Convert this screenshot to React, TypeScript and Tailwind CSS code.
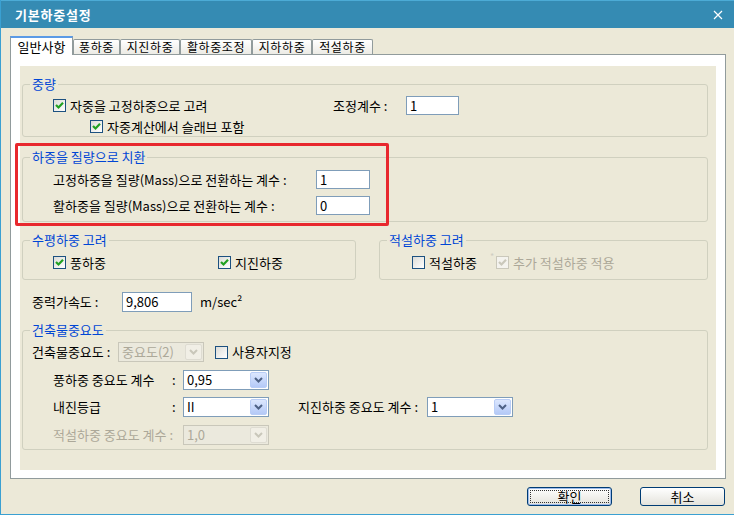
import React from "react";

function Check({ checked, disabled }: { checked?: boolean; disabled?: boolean }) {
    return (
        <span
            className={
                "w-[13px] h-[13px] shrink-0 border flex items-center justify-center " +
                (disabled
                    ? "border-[#cac8bb] bg-[#f4f3ee]"
                    : "border-[#1c5180] bg-gradient-to-br from-[#dcdcd7] to-white")
            }
        >
            {checked && (
                <svg width="11" height="11" viewBox="0 0 11 11">
                    <polyline
                        points="2,5 4.5,7.5 9,2.8"
                        fill="none"
                        stroke={disabled ? "#cac8bb" : "#21a121"}
                        strokeWidth="2.2"
                    />
                </svg>
            )}
        </span>
    );
}

function CheckLabel({ label, checked, disabled }: { label: string; checked?: boolean; disabled?: boolean }) {
    return (
        <label className={"flex items-center gap-[4px] " + (disabled ? "text-[#aca899]" : "text-black")}>
            <Check checked={checked} disabled={disabled} />
            <span>{label}</span>
        </label>
    );
}

function TextBox({ value, w }: { value: string; w: string }) {
    return (
        <div className={"h-full border border-[#7f9db9] bg-white flex items-center pl-[3px] " + w}>{value}</div>
    );
}

function Chevron({ color }: { color: string }) {
    return (
        <svg width="9" height="6" viewBox="0 0 9 6">
            <polyline points="1,1 4.5,4.5 8,1" fill="none" stroke={color} strokeWidth="2" />
        </svg>
    );
}

function Combo({ value, disabled }: { value: string; disabled?: boolean }) {
    return (
        <div
            className={
                "w-[86px] h-[20px] border flex items-stretch p-px " +
                (disabled ? "border-[#c9c7ba] bg-[#ebe9dd] text-[#aca899]" : "border-[#7f9db9] bg-white text-black")
            }
        >
            <span className="flex-1 flex items-center pl-[2px]">{value}</span>
            <span
                className={
                    "w-[17px] rounded-[2px] border flex items-center justify-center " +
                    (disabled
                        ? "border-[#dedcd2] bg-[#f1efe6]"
                        : "border-[#b9cdf6] bg-gradient-to-b from-[#dce7fe] to-[#b4c9f7]")
                }
            >
                <Chevron color={disabled ? "#c9c7ba" : "#4d6185"} />
            </span>
        </div>
    );
}

function Group({ title, w, className, children }: { title: string; w: string; className?: string; children: React.ReactNode }) {
    return (
        <fieldset className={"border border-[#d0d0bf] rounded-[3px] p-0 " + w + " " + (className ?? "")}>
            <legend className="ml-[7px] px-[2px] leading-[14px] text-[#0046d5]">{title}</legend>
            {children}
        </fieldset>
    );
}

function Tab({ label, w, active }: { label: string; w: string; active?: boolean }) {
    if (active) {
        return (
            <div
                className={
                    "relative z-10 h-[19px] -mb-px bg-white border-l border-r border-[#919b9c] border-t-2 border-t-[#5b9ae6] flex items-center justify-center text-[13px] leading-[15px] " +
                    w
                }
            >
                {label}
            </div>
        );
    }
    return (
        <div
            className={
                "h-[15px] border-t border-l border-r border-[#919b9c] rounded-t-[2px] bg-gradient-to-b from-white to-[#ecebe5] flex items-start justify-center text-[12px] leading-[13px] tracking-[0.6px] overflow-hidden " +
                w
            }
        >
            {label}
        </div>
    );
}

export default function App() {
    return (
        <div className="w-[734px] h-[515px] bg-[#ece9d8] border-l border-b border-[#3aa0d2] font-['Noto_Sans_CJK_KR',sans-serif] text-[13px] text-black flex flex-col overflow-hidden">
            {/* title bar */}
            <div className="h-[28px] shrink-0 bg-[#358bb3] border-t border-[#4cabd6] flex items-center justify-between pl-[14px] pr-[11px]">
                <span className="text-white font-bold text-[13px] tracking-[0.8px]">기본하중설정</span>
                <svg width="10" height="10" viewBox="0 0 10 10">
                    <path d="M1 1 L9 9 M9 1 L1 9" stroke="white" strokeWidth="1.2" />
                </svg>
            </div>

            {/* tabs */}
            <div className="mt-[8px] ml-[9px] h-[18px] flex items-end">
                <Tab label="일반사항" w="w-[63px]" active />
                <Tab label="풍하중" w="w-[47px]" />
                <Tab label="지진하중" w="w-[60px]" />
                <Tab label="활하중조정" w="w-[72px]" />
                <Tab label="지하하중" w="w-[60px]" />
                <Tab label="적설하중" w="w-[61px]" />
            </div>

            {/* tab page */}
            <div className="ml-[9px] w-[716px] h-[425px] border border-[#919b9c] bg-white pt-[11px] px-[9px] pb-[8px] flex flex-col">
                <div className="relative flex-1 bg-[#ece9d8] pl-[2px] flex flex-col">
                    {/* 중량 */}
                    <Group title="중량" w="w-[686px]" className="mt-[11px]">
                        <div className="pt-[5px] pl-[30px] flex flex-col gap-[2px]">
                            <div className="h-[19px] flex items-center">
                                <div className="w-[280px]">
                                    <CheckLabel label="자중을 고정하중으로 고려" checked />
                                </div>
                                <span className="w-[73px]">조정계수 :</span>
                                <TextBox value="1" w="w-[53px]" />
                            </div>
                            <div className="h-[19px] flex items-center pl-[37px]">
                                <CheckLabel label="자중계산에서 슬래브 포함" checked />
                            </div>
                        </div>
                    </Group>

                    {/* 하중을 질량으로 치환 */}
                    <Group title="하중을 질량으로 치환" w="w-[686px]" className="mt-[13px]">
                        <div className="pt-[6px] pb-[6px] pl-[30px] flex flex-col gap-[7px]">
                            <div className="h-[19px] flex items-center">
                                <span className="w-[263px]">고정하중을 질량(Mass)으로 전환하는 계수 :</span>
                                <TextBox value="1" w="w-[54px]" />
                            </div>
                            <div className="h-[19px] flex items-center">
                                <span className="w-[263px]">활하중을 질량(Mass)으로 전환하는 계수 :</span>
                                <TextBox value="0" w="w-[54px]" />
                            </div>
                        </div>
                    </Group>

                    {/* 수평하중 / 적설하중 */}
                    <div className="mt-[11px] flex">
                        <Group title="수평하중 고려" w="w-[334px]">
                            <div className="pt-[6px] pb-[7px] pl-[30px] h-[19px] box-content flex items-center">
                                <div className="w-[165px]">
                                    <CheckLabel label="풍하중" checked />
                                </div>
                                <CheckLabel label="지진하중" checked />
                            </div>
                        </Group>
                        <Group title="적설하중 고려" w="w-[329px]" className="ml-[23px]">
                            <div className="pt-[6px] pb-[7px] pl-[32px] h-[19px] box-content flex items-center">
                                <div className="w-[78px]">
                                    <CheckLabel label="적설하중" />
                                </div>
                                <span className="w-[6px] self-start mt-[-1px] text-[9px] leading-none text-[#cfcdc2]">*</span>
                                <CheckLabel label="추가 적설하중 적용" checked disabled />
                            </div>
                        </Group>
                    </div>

                    {/* 중력가속도 */}
                    <div className="mt-[12px] h-[20px] pl-[10px] flex items-center">
                        <span className="w-[90px]">중력가속도 :</span>
                        <TextBox value="9,806" w="w-[70px]" />
                        <span className="ml-[8px]">m/sec²</span>
                    </div>

                    {/* 건축물중요도 */}
                    <Group title="건축물중요도" w="w-[686px]" className="mt-[11px]">
                        <div className="pt-[5px] pb-[4px] flex flex-col">
                            <div className="h-[20px] pl-[9px] flex items-center">
                                <span className="w-[86px]">건축물중요도 :</span>
                                <Combo value="중요도(2)" disabled />
                                <div className="ml-[11px]">
                                    <CheckLabel label="사용자지정" />
                                </div>
                            </div>
                            <div className="mt-[8px] h-[20px] pl-[30px] flex items-center">
                                <span className="w-[119px]">풍하중 중요도 계수</span>
                                <span className="w-[11px]">:</span>
                                <Combo value="0,95" />
                            </div>
                            <div className="mt-[7px] h-[20px] pl-[30px] flex items-center">
                                <span className="w-[119px]">내진등급</span>
                                <span className="w-[11px]">:</span>
                                <Combo value="II" />
                                <span className="ml-[29px] w-[129px]">지진하중 중요도 계수 :</span>
                                <Combo value="1" />
                            </div>
                            <div className="mt-[8px] h-[20px] pl-[30px] flex items-center">
                                <span className="w-[130px] text-[#aca899]">적설하중 중요도 계수 :</span>
                                <Combo value="1,0" disabled />
                            </div>
                        </div>
                    </Group>

                    {/* highlight annotation */}
                    <div className="absolute left-[-5px] top-[77px] w-[374px] h-[83px] border-[3px] border-[#e8282e] rounded-[2px] pointer-events-none" />
                </div>
            </div>

            {/* buttons */}
            <div className="mt-[8px] pr-[9px] flex justify-end gap-[28px]">
                <button className="w-[85px] h-[19px] rounded-[3px] border border-[#003c74] bg-gradient-to-b from-white to-[#e4e3dc] shadow-[inset_0_0_0_1px_#9ebcec] p-[2px] flex">
                    <span className="flex-1 border border-dotted border-[#333] flex items-center justify-center leading-none">확인</span>
                </button>
                <button className="w-[85px] h-[19px] rounded-[3px] border border-[#003c74] bg-gradient-to-b from-white to-[#e4e3dc] flex items-center justify-center leading-none">
                    취소
                </button>
            </div>
        </div>
    );
}
